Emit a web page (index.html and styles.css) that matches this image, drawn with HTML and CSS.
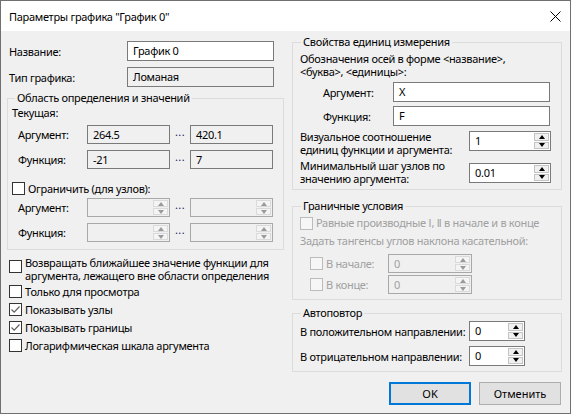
FILE: index.html
```html
<!DOCTYPE html>
<html lang="ru">
<head>
<meta charset="utf-8">
<title>Параметры графика</title>
<link rel="stylesheet" href="styles.css">
</head>
<body>
<div class="window">
  <div class="titlebar">
    <span class="title">Параметры графика "График 0"</span>
    <svg class="close" width="11" height="11" viewBox="0 0 11 11"><path d="M0.5 0.5 L10.5 10.5 M10.5 0.5 L0.5 10.5" stroke="#000" stroke-width="1" fill="none"/></svg>
  </div>
  <div class="content">
    <div class="col left">
      <div class="frow first"><span class="flabel">Название:</span><div class="field wide">График 0</div></div>
      <div class="frow"><span class="flabel">Тип графика:</span><div class="field wide ro">Ломаная</div></div>
      <fieldset class="grp g1">
        <legend>Область определения и значений</legend>
        <div class="sub">Текущая:</div>
        <div class="range r1"><span class="rlabel">Аргумент:</span><div class="field ro small">264.5</div><span class="dots">...</span><div class="field ro small">420.1</div></div>
        <div class="range r2"><span class="rlabel">Функция:</span><div class="field ro small">-21</div><span class="dots">...</span><div class="field ro small">7</div></div>
        <div class="chk gchk"><span class="box"></span><span>Ограничить (для узлов):</span></div>
        <div class="range r3"><span class="rlabel">Аргумент:</span>
          <div class="spin dis small"><span class="sv"></span><span class="sb"><i class="up"></i><i class="dn"></i></span></div>
          <span class="dots">...</span>
          <div class="spin dis small"><span class="sv"></span><span class="sb"><i class="up"></i><i class="dn"></i></span></div>
        </div>
        <div class="range r2"><span class="rlabel">Функция:</span>
          <div class="spin dis small"><span class="sv"></span><span class="sb"><i class="up"></i><i class="dn"></i></span></div>
          <span class="dots">...</span>
          <div class="spin dis small"><span class="sv"></span><span class="sb"><i class="up"></i><i class="dn"></i></span></div>
        </div>
      </fieldset>
      <div class="checks">
        <div class="chk multi"><span class="box"></span><span class="lines"><span class="ln">Возвращать ближайшее значение функции для</span><span class="ln">аргумента, лежащего вне области определения</span></span></div>
        <div class="chk line"><span class="box"></span><span>Только для просмотра</span></div>
        <div class="chk line"><span class="box"><svg width="11" height="11" viewBox="0 0 11 11"><path d="M1.5 5.5 L4.2 8.2 L9.5 2.5" stroke="#606060" stroke-width="1.2" fill="none"/></svg></span><span>Показывать узлы</span></div>
        <div class="chk line"><span class="box"><svg width="11" height="11" viewBox="0 0 11 11"><path d="M1.5 5.5 L4.2 8.2 L9.5 2.5" stroke="#606060" stroke-width="1.2" fill="none"/></svg></span><span>Показывать границы</span></div>
        <div class="chk line"><span class="box"></span><span>Логарифмическая шкала аргумента</span></div>
      </div>
    </div>
    <div class="col right">
      <fieldset class="grp g2">
        <legend>Свойства единиц измерения</legend>
        <div class="lines"><span class="ln">Обозначения осей в форме &lt;название&gt;,</span><span class="ln">&lt;буква&gt;, &lt;единицы&gt;:</span></div>
        <div class="arow"><span class="alabel">Аргумент:</span><div class="field long">X</div></div>
        <div class="arow"><span class="alabel">Функция:</span><div class="field long">F</div></div>
        <div class="srow s1"><span class="lines"><span class="ln">Визуальное соотношение</span><span class="ln">единиц функции и аргумента:</span></span>
          <div class="spin mid"><span class="sv">1</span><span class="sb"><i class="up"></i><i class="dn"></i></span></div>
        </div>
        <div class="srow s2"><span class="lines"><span class="ln">Минимальный шаг узлов по</span><span class="ln">значению аргумента:</span></span>
          <div class="spin mid"><span class="sv">0.01</span><span class="sb"><i class="up"></i><i class="dn"></i></span></div>
        </div>
      </fieldset>
      <fieldset class="grp g3">
        <legend>Граничные условия</legend>
        <div class="chk dline disabled"><span class="box"></span><span>Равные производные <span class="roman">Ⅰ</span>, <span class="roman">Ⅱ</span> в начале и в конце</span></div>
        <div class="dline disabled">Задать тангенсы углов наклона касательной:</div>
        <div class="trow t1 disabled"><span class="tlabel"><span class="box"></span>В начале:</span>
          <div class="spin dis tan"><span class="sv">0</span><span class="sb"><i class="up"></i><i class="dn"></i></span></div>
        </div>
        <div class="trow t2 disabled"><span class="tlabel"><span class="box"></span>В конце:</span>
          <div class="spin dis tan"><span class="sv">0</span><span class="sb"><i class="up"></i><i class="dn"></i></span></div>
        </div>
      </fieldset>
      <fieldset class="grp g4">
        <legend>Автоповтор</legend>
        <div class="prow p1"><span class="plabel">В положительном направлении:</span>
          <div class="spin short"><span class="sv">0</span><span class="sb"><i class="up"></i><i class="dn"></i></span></div>
        </div>
        <div class="prow p2"><span class="plabel">В отрицательном направлении:</span>
          <div class="spin short"><span class="sv">0</span><span class="sb"><i class="up"></i><i class="dn"></i></span></div>
        </div>
      </fieldset>
      <div class="buttons">
        <button class="btn default">OK</button>
        <button class="btn">Отменить</button>
      </div>
    </div>
  </div>
</div>
</body>
</html>
```
FILE: styles.css
```css
* { box-sizing: border-box; }
html, body { margin: 0; padding: 0; }
body {
  font-family: "Noto Sans", "Open Sans", sans-serif;
  font-size: 11px;
  letter-spacing: -0.3px;
  color: #000;
  background: #f0f0f0;
  white-space: nowrap;
}
.window {
  width: 571px;
  height: 414px;
  border: 1px solid #707070;
  background: #f0f0f0;
  display: flex;
  flex-direction: column;
  overflow: hidden;
}
.titlebar {
  height: 30px;
  flex: none;
  background: #fff;
  display: flex;
  align-items: center;
  padding-left: 8px;
  padding-right: 9px;
}
.title { font-size: 11px; }
.close { margin-left: auto; }

.content {
  flex: 1;
  display: flex;
  gap: 8px;
  padding: 0 8px 0 6px;
}
.col { display: flex; flex-direction: column; }
.left { width: 277px; }
.right { width: 270px; }

/* multi-line labels */
.lines { display: flex; flex-direction: column; }
.ln { display: block; height: 13px; line-height: 13px; }

/* text fields */
.field {
  height: 20px;
  border: 1px solid #7a7a7a;
  background: #fff;
  padding-left: 5px;
  line-height: 18px;
}
.field.ro { background: #f0f0f0; }
.field.wide { width: 147px; }
.field.small { width: 83px; height: 19px; line-height: 17px; }
.field.long { width: 157px; }

.frow {
  display: flex;
  align-items: center;
  height: 20px;
  padding-left: 2px;
  margin-top: 6px;
}
.frow.first { margin-top: 10px; }
.flabel { width: 118px; }

/* group boxes */
.grp {
  margin: 0;
  border: 1px solid #dcdcdc;
  min-width: 0;
}
.grp legend {
  line-height: 14px;
  padding: 0 2px;
}
.g1 { margin-top: 4px; padding: 1px 4px 7px 4px; }
.g1 legend { margin-left: 3px; }
.sub { line-height: 14px; }

.range {
  display: flex;
  align-items: center;
  height: 19px;
}
.range.r1 { margin-top: 5px; }
.range.r2 { margin-top: 6px; }
.range.r3 { margin-top: 2px; }
.rlabel { width: 69px; margin-left: 6px; }
.dots {
  width: 20px;
  text-align: center;
  line-height: 14px;
  padding-bottom: 5px;
  color: #1a1a50;
  letter-spacing: 0.4px;
}

/* checkboxes */
.chk { display: flex; align-items: center; }
.box {
  width: 13px;
  height: 13px;
  flex: none;
  border: 1px solid #333;
  background: #fff;
  margin-right: 3px;
  display: inline-flex;
  align-items: center;
  justify-content: center;
}
.gchk { margin-top: 12px; line-height: 15px; }
.checks { padding-left: 2px; margin-top: 6px; }
.chk.multi { align-items: flex-start; }
.chk.multi .box { margin-top: 4px; }
.chk.line { height: 18px; }

/* spinners */
.spin {
  display: flex;
  height: 20px;
  border: 1px solid #7a7a7a;
  background: #fff;
}
.spin .sv {
  flex: 1;
  padding-left: 5px;
  line-height: 18px;
}
.spin .sb {
  width: 16px;
  display: flex;
  flex-direction: column;
  padding: 1px 1px 1px 0;
  gap: 1px;
}
.spin .sb i {
  flex: 1;
  background: #f0f0f0;
  border: 1px solid #c4c4c4;
  display: flex;
  align-items: center;
  justify-content: center;
}
.spin .sb i::before {
  content: "";
  width: 0;
  height: 0;
  border-left: 3.5px solid transparent;
  border-right: 3.5px solid transparent;
}
.spin .sb .up::before { border-bottom: 4px solid #000; }
.spin .sb .dn::before { border-top: 4px solid #000; }
.spin.dis { border-color: #a8a8a8; background: #f0f0f0; }
.spin.dis .sv { color: #a0a0a0; }
.spin.dis .sb i { border-color: #dadada; background: #f4f4f4; }
.spin.dis .sb .up::before { border-bottom-color: #9a9a9a; }
.spin.dis .sb .dn::before { border-top-color: #9a9a9a; }
.spin.small { width: 83px; height: 19px; }
.spin.small .sv { line-height: 17px; }
.spin.mid { width: 82px; }
.spin.tan { width: 84px; height: 19px; }
.spin.tan .sv { line-height: 17px; }
.spin.short { width: 56px; }

/* right column */
.g2 { margin-top: 4px; padding: 3px 10px 4px 7px; }
.g2 legend, .g3 legend, .g4 legend { margin-left: 1px; }
.arow {
  display: flex;
  align-items: center;
  height: 20px;
  margin-top: 4px;
}
.alabel { width: 93px; padding-left: 23px; }
.srow { display: flex; align-items: flex-start; }
.srow .spin { margin-left: auto; }
.srow.s1 { margin-top: 4px; }
.srow.s1 .spin { margin-top: 1px; }
.srow.s2 { margin-top: 3px; }
.srow.s2 .spin { margin-top: 4px; }

.g3 { margin-top: 9px; padding: 2px 10px 5px 7px; }
.disabled { color: #a0a0a0; }
.disabled .box { border-color: #bcbcbc; background: #f6f6f6; }
.roman { font-family: "DejaVu Sans", sans-serif; font-size: 10px; letter-spacing: 0; }
.dline { line-height: 16px; height: 16px; }
.g3 .dline + .dline { margin-top: 2px; }
.trow {
  display: flex;
  align-items: center;
  height: 19px;
  padding-left: 10px;
}
.trow.t1 { margin-top: 5px; }
.trow.t2 { margin-top: 2px; }
.tlabel { width: 78px; display: flex; align-items: center; }

.g4 { margin-top: 6px; padding: 1px 10px 5px 7px; }
.prow { display: flex; align-items: center; height: 20px; }
.prow.p2 { margin-top: 5px; }
.plabel { width: 169px; }

.buttons {
  display: flex;
  justify-content: flex-end;
  gap: 8px;
  margin-top: 10px;
  margin-right: 1px;
}
.btn {
  width: 82px;
  height: 23px;
  font: inherit;
  color: #000;
  background: #e1e1e1;
  border: 1px solid #adadad;
  padding: 0;
  border-radius: 0;
}
.btn.default { border: 2px solid #0078d7; }
```
